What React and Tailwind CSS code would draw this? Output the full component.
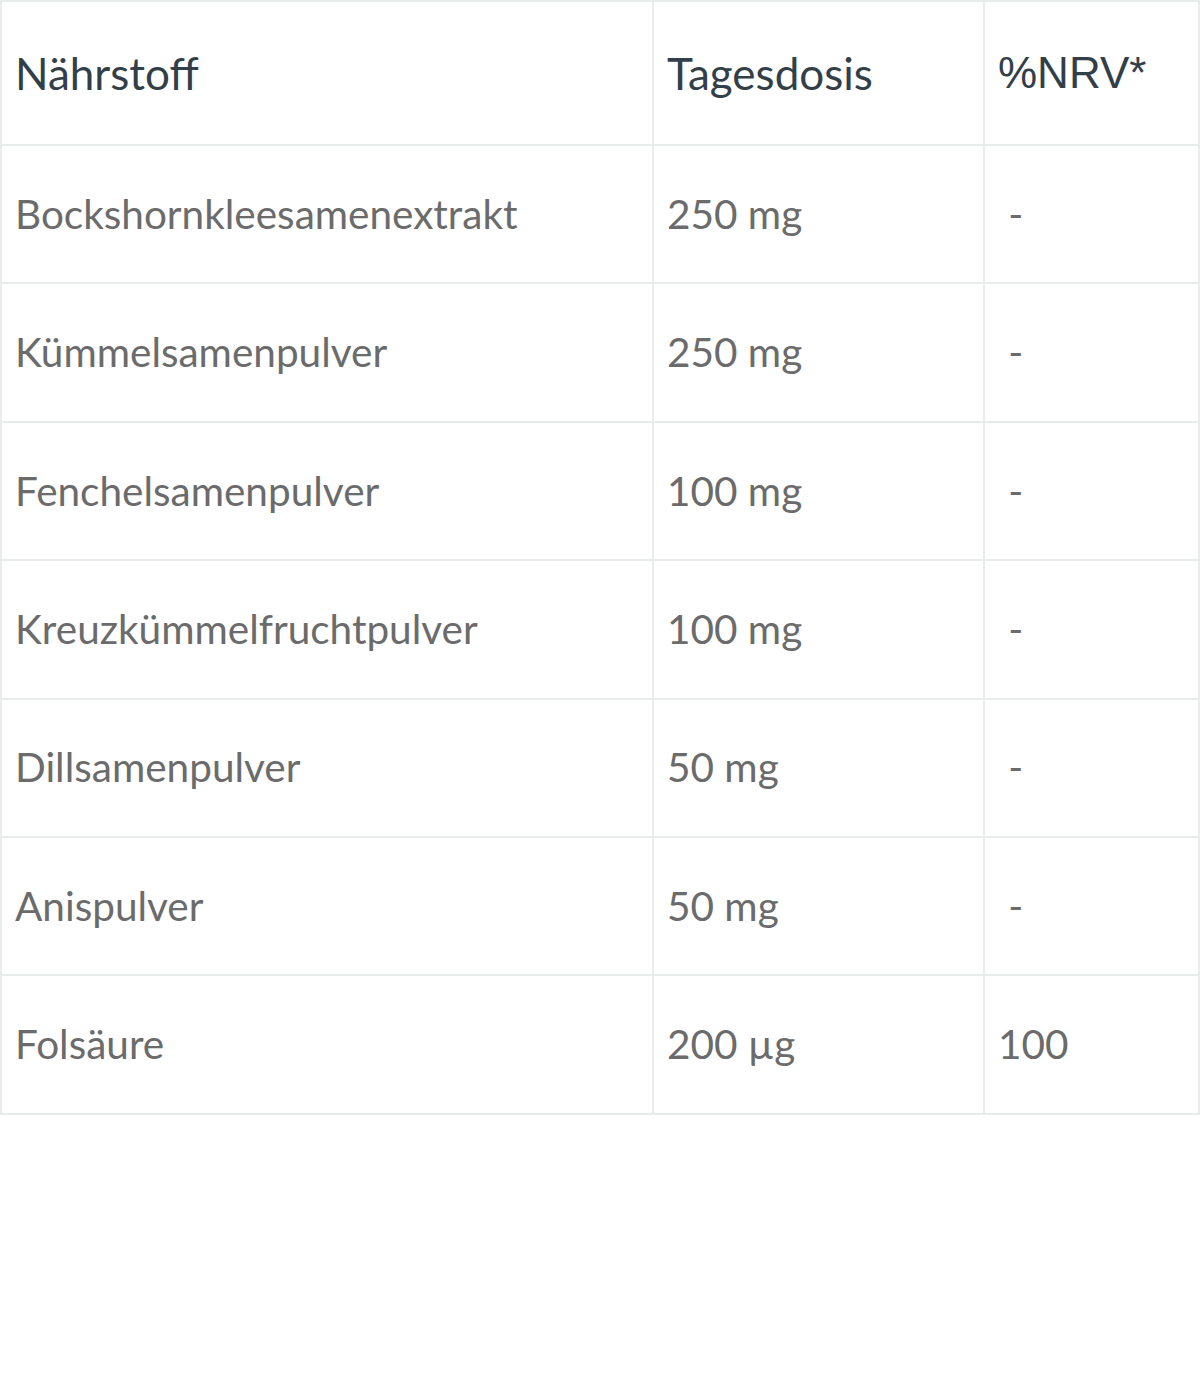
import React from "react";

const rows = [
  { name: "Bockshornkleesamenextrakt", dose: "250 mg", nrv: "\u00a0-" },
  { name: "Kümmelsamenpulver", dose: "250 mg", nrv: "\u00a0-" },
  { name: "Fenchelsamenpulver", dose: "100 mg", nrv: "\u00a0-" },
  { name: "Kreuzkümmelfruchtpulver", dose: "100 mg", nrv: "\u00a0-" },
  { name: "Dillsamenpulver", dose: "50 mg", nrv: "\u00a0-" },
  { name: "Anispulver", dose: "50 mg", nrv: "\u00a0-" },
  { name: "Folsäure", dose: "200 µg", nrv: "100" },
];

const App = () => {
  return (
    <div className="w-[1200px] bg-white" style={{ fontFamily: "Lato, 'Noto Sans', sans-serif" }}>
      <table className="w-full table-fixed border-collapse border-2 border-[#e8ecec]">
        <colgroup>
          <col className="w-[652px]" />
          <col className="w-[331px]" />
          <col />
        </colgroup>
        <thead>
          <tr className="h-[144px]">
            <th className="border-2 border-[#e8ecec] px-[13px] text-left align-middle text-[44px] font-normal text-[#333f48]">
              Nährstoff
            </th>
            <th className="border-2 border-[#e8ecec] px-[13px] text-left align-middle text-[44px] font-normal text-[#333f48]">
              Tagesdosis
            </th>
            <th
              className="border-2 border-[#e8ecec] px-[13px] text-left align-middle text-[44px] font-normal text-[#333f48]"
              style={{ fontFamily: "'Liberation Sans', Arial, sans-serif" }}
            >
              %NRV*
            </th>
          </tr>
        </thead>
        <tbody>
          {rows.map((r) => (
            <tr key={r.name} className="h-[138.4px]">
              <td className="border-2 border-[#e8ecec] px-[13px] align-middle text-[40.5px] font-normal text-[#6b6b6b]">
                {r.name}
              </td>
              <td className="border-2 border-[#e8ecec] px-[13px] align-middle text-[40.5px] font-normal text-[#6b6b6b]">
                {r.dose}
              </td>
              <td className="border-2 border-[#e8ecec] px-[13px] align-middle text-[40.5px] font-normal text-[#6b6b6b]">
                {r.nrv}
              </td>
            </tr>
          ))}
        </tbody>
      </table>
    </div>
  );
};

export default App;
